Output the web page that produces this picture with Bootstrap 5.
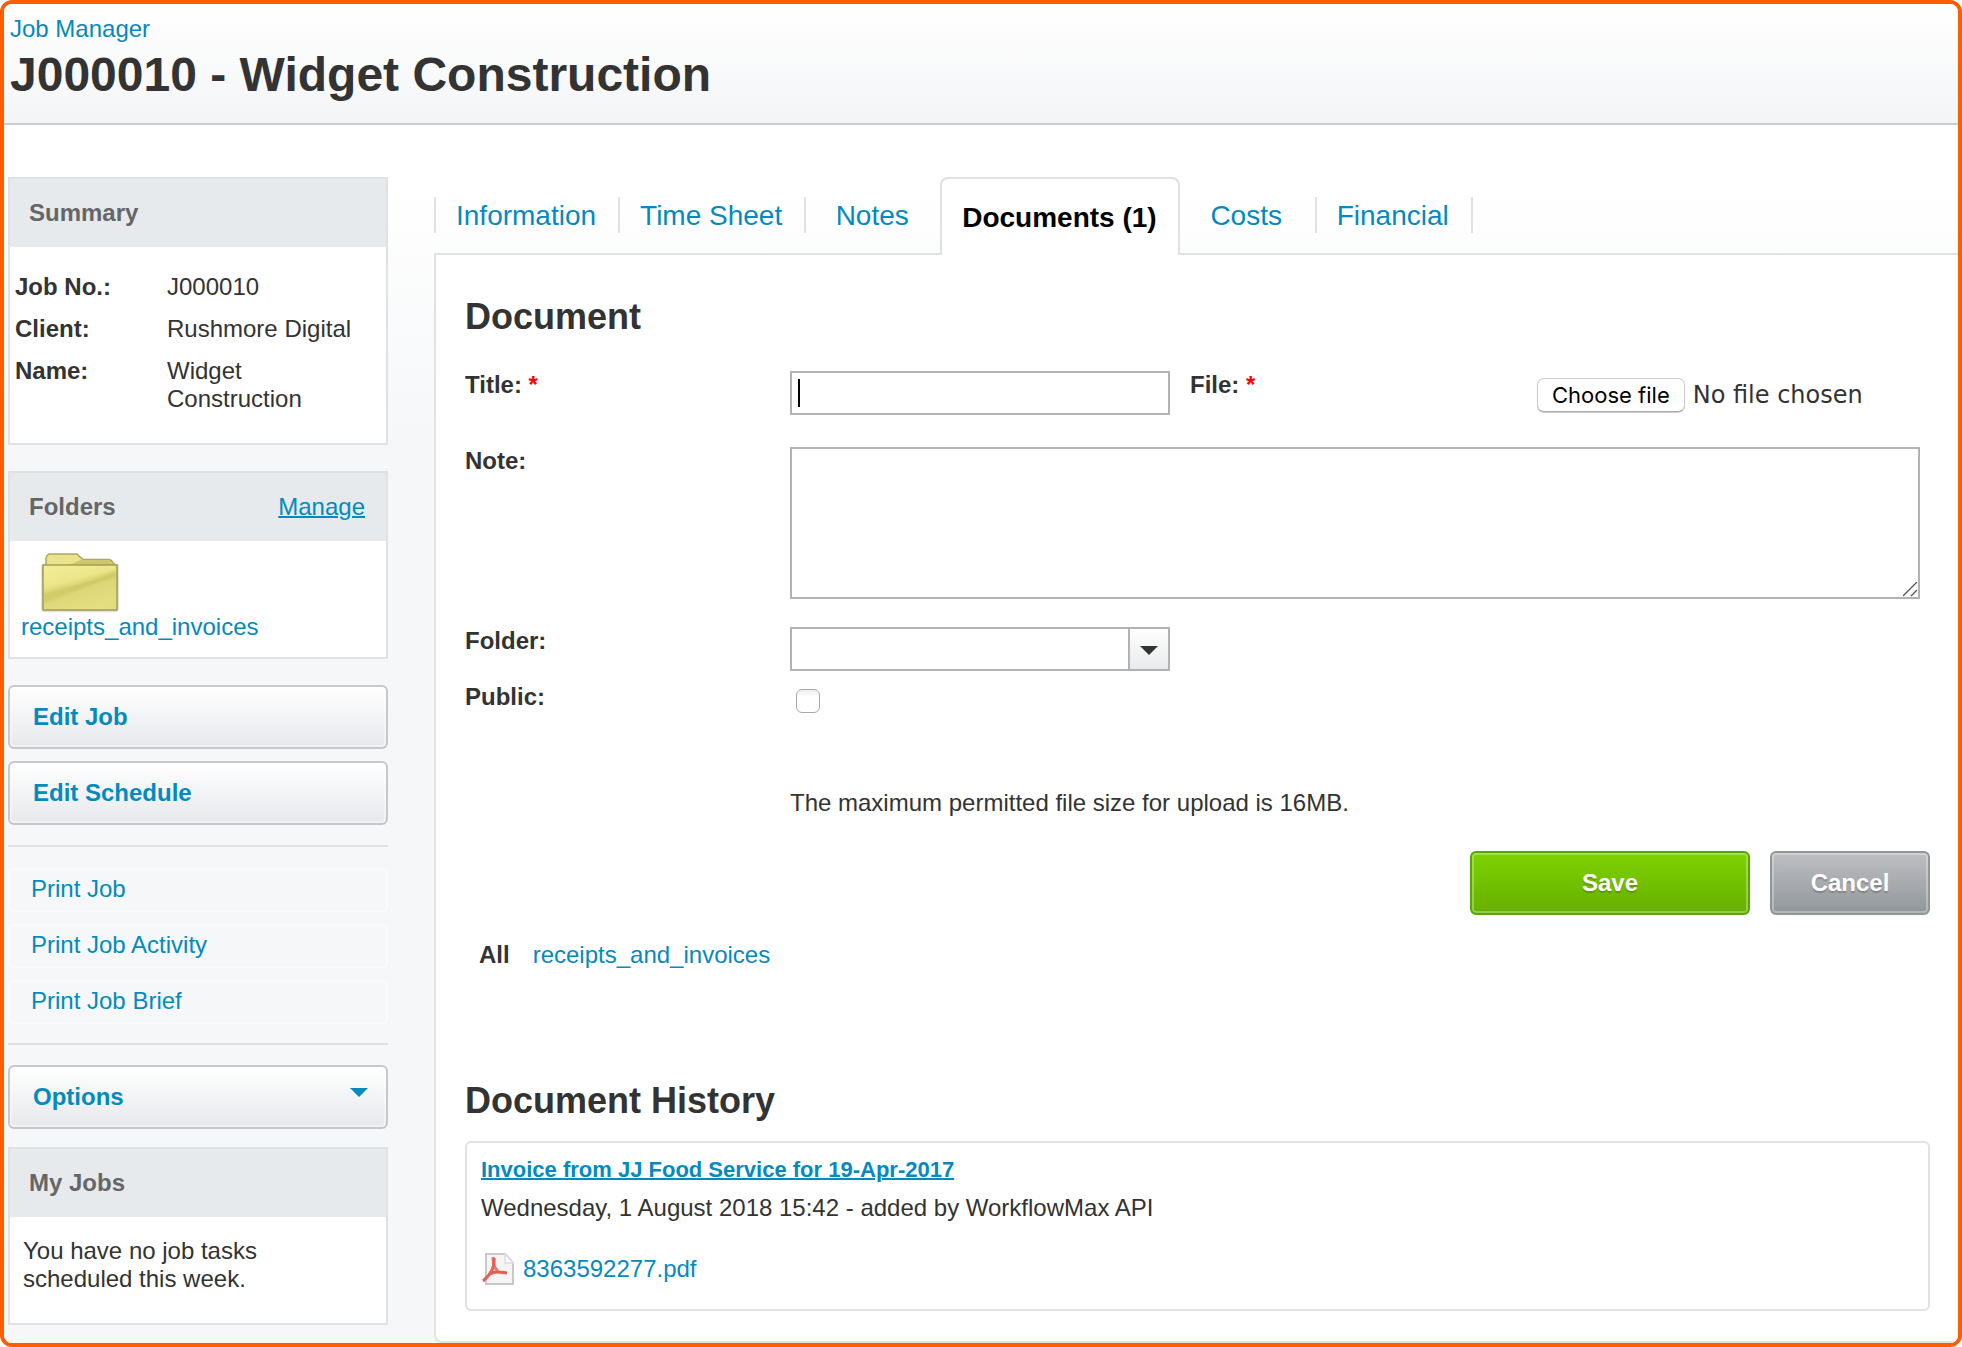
<!DOCTYPE html>
<html lang="en">
<head>
<meta charset="utf-8">
<meta name="viewport" content="width=device-width, initial-scale=1">
<title>J000010 - Widget Construction</title>
<link rel="stylesheet" href="https://cdn.jsdelivr.net/npm/bootstrap@5.3.0/dist/css/bootstrap.min.css">
<style>
  body { font: 24px/28px "Liberation Sans", Arial, sans-serif; color: #333; background: #fff; }
  a { color: #048abf; text-decoration: none; }
  a:hover { color: #036a93; text-decoration: underline; }
  .app-frame { border: 4px solid #ff5d00; border-radius: 12px; overflow: hidden; }

  .page-top { padding: 11px 6px 20px; border-bottom: 2px solid #ccc; background: linear-gradient(#fff, #f4f5f7); }
  .page-top h1 { font-size: 48px; line-height: 56px; font-weight: 700; margin: 4px 0 0; }
  .page-main { padding: 52px 0 0 4px; gap: 46px; background: linear-gradient(#fff 60px, #f6f7f9 310px); }

  /* Sidebar */
  .side { width: 380px; flex: none; padding-bottom: 18px; }
  .panel { border: 2px solid #e0e1e2; background: #fff; margin-bottom: 26px; }
  .panel-head { background: #e6eaed; padding: 20px 21px 20px 19px; }
  .panel-head h2 { font-size: 24px; line-height: 28px; font-weight: 700; color: #666; margin: 0; }
  .facts { padding: 26px 20px 16px 5px; margin: 0; }
  .facts div { display: flex; margin-bottom: 14px; }
  .facts dt { width: 152px; flex: none; }
  .facts dd { margin: 0; }
  .folder-body { padding: 12px 11px 16px; }
  .folder-body svg { display: block; margin-left: 20px; }
  .side-actions { gap: 12px; }
  .side-btn { height: 64px; border: 2px solid #c6c8ca; border-radius: 6px; padding: 16px 23px; font-size: 24px; line-height: 28px; font-weight: 700; color: #048abf; text-align: left; background: linear-gradient(#fff, #e6e8eb); box-shadow: inset 0 0 0 2px rgba(255,255,255,.4); }
  .side-options { margin: 20px 0 18px; padding-right: 18px; }
  .options-arrow { margin-top: 5px; }
  .side-rule { height: 2px; margin: 0; border: 0; background: #e0e1e2; opacity: 1; }
  .side-actions + .side-rule { margin-top: 20px; }
  .print-links { margin: 21px 0 19px; gap: 12px; }
  .print-links a { border: 2px solid #f9fafb; border-radius: 6px; padding: 5px 21px 7px; }
  .jobs-text { padding: 20px 90px 30px 13px; }

  /* Tabs */
  .tab-bar { height: 76px; margin: 0; padding: 0; list-style: none; }
  .tab-bar li { height: 36px; min-width: 137px; margin-top: 20px; padding: 0 22px 0 20px; font-size: 28px; line-height: 38px; text-align: center; border-right: 2px solid #e0e1e2; }
  .tab-bar li:first-child { border-left: 2px solid #e0e1e2; }
  .tab-bar li.before-current { border-right: 0; min-width: 134px; }
  .tab-bar li.current { position: relative; height: 78px; margin: 0; padding: 20px 21px 0 20px; border: 2px solid #e0e1e2; border-bottom: 0; border-radius: 8px 8px 0 0; background: #fff; font-weight: 700; }
  .tab-bar li.current a { color: #000; }
  .sheet { flex: 1; padding: 41px 28px 28px 29px; border: 2px solid #e0e1e2; border-right: 0; border-radius: 0 0 0 8px; background: #fff; }
  .sheet h2 { font-size: 36px; line-height: 42px; font-weight: 700; margin: 0; }

  /* Form */
  .doc-form { display: grid; grid-template-columns: 325fr 400fr 347fr 383fr; padding: 33px 10px 0 0; }
  .doc-form .cap { font-weight: 700; align-self: start; }
  .doc-form .req { color: #f00; }
  .wide { grid-column: 2 / -1; }
  .half { grid-column: 2; margin-right: 20px; }
  .box { display: block; border: 2px solid #b0b2b3; border-radius: 0; background-color: #fff; color: #333; padding: 6px; min-width: 0; outline: 0; }
  .box-line { height: 44px; }
  .box-text { background: linear-gradient(#000, #000) 6px 6px / 2px 28px no-repeat #fff; }
  .box-note { height: 152px; width: 100%; resize: both; margin-top: 32px; }
  .box-note::-webkit-resizer { background: url("data:image/svg+xml,%3Csvg xmlns='http://www.w3.org/2000/svg' width='15' height='15'%3E%3Cpath d='M0 14L14 0M8 14L14 8' stroke='%23555' stroke-width='1.3'/%3E%3C/svg%3E") no-repeat; }
  .note-cap { margin-top: 32px; }
  .gap-folder { margin-top: 28px; }
  .gap-public { margin-top: 12px; }
  .doc-form .public-cap { grid-column: 1; }
  .box-pick { appearance: none; background:
      url("data:image/svg+xml,%3Csvg xmlns='http://www.w3.org/2000/svg' width='18' height='9'%3E%3Cpath d='M0 0H18L9 9Z' fill='%23333'/%3E%3C/svg%3E") right 10px top 17px no-repeat,
      linear-gradient(#b0b2b3, #b0b2b3) right 38px top 0 / 2px 100% no-repeat,
      linear-gradient(#fff, #e9eaec) right top / 38px 100% no-repeat, #fff; }
  .tick { appearance: none; width: 24px; height: 24px; margin: 6px 0 0 6px; border: 1px solid #a9a9a9; border-radius: 6px; background: linear-gradient(#eee, #fff 7px); }
  .tick:checked { background: #048abf; }
  .limit { margin: 76px 0 34px; }
  .pick-btn { height: 34px; border: 1px solid #ccc; border-bottom-color: #aaa; border-radius: 7px; padding: 2px 14px; font: 22px/28px Inter, sans-serif; color: #000; background: #fff; box-shadow: 0 1px 1px rgba(0,0,0,.2); white-space: nowrap; cursor: pointer; }
  .pick-name { font: 24px/28px "DejaVu Sans", sans-serif; white-space: nowrap; }
  .form-actions { gap: 20px; }
  .act { height: 64px; border-radius: 6px; border: 2px solid; font-size: 24px; line-height: 28px; font-weight: 700; color: #fff; padding: 0; box-shadow: inset 0 0 0 2px rgba(255,255,255,.3); text-shadow: 0 2px 1px rgba(0,0,0,.2); }
  .act-save { width: 280px; border-color: #58a800; background: linear-gradient(#7dd200, #68af00); }
  .act-cancel { width: 160px; border-color: #919699; background: linear-gradient(#bdbec2, #92979a); }

  /* History */
  .folder-filter { gap: 23px; margin: 26px 0 111px; padding-left: 14px; }
  .history { margin-top: 19px; padding: 13px 13px 24px 14px; border: 2px solid #e0e1e2; border-radius: 6px; }
  .history-title { font-size: 22px; font-weight: 700; }
  .history-title, .underlined { text-decoration: underline; text-decoration-thickness: 2px; }
  .history-when { margin: 10px 0 31px; }
</style>
<script src="https://cdn.jsdelivr.net/npm/bootstrap@5.3.0/dist/js/bootstrap.bundle.min.js"></script>
</head>
<body>
<div class="app-frame min-vh-100 d-flex flex-column">
  <header class="page-top">
    <a class="d-block" href="#">Job Manager</a>
    <h1>J000010 - Widget Construction</h1>
  </header>

  <div class="page-main d-flex flex-grow-1">
    <aside class="side">
      <section class="panel">
        <div class="panel-head"><h2>Summary</h2></div>
        <dl class="facts">
          <div><dt>Job No.:</dt><dd>J000010</dd></div>
          <div><dt>Client:</dt><dd>Rushmore Digital</dd></div>
          <div><dt>Name:</dt><dd>Widget Construction</dd></div>
        </dl>
      </section>

      <section class="panel">
        <div class="panel-head d-flex justify-content-between"><h2>Folders</h2><a class="underlined" href="#">Manage</a></div>
        <div class="folder-body">
          <svg width="78" height="60" viewBox="0 0 78 60" aria-hidden="true">
            <defs>
              <linearGradient id="fg" x1="0" y1="0" x2=".45" y2="1">
                <stop offset="0" stop-color="#f3ef96"/><stop offset=".42" stop-color="#ece68a"/>
                <stop offset=".56" stop-color="#d6cf70"/><stop offset=".62" stop-color="#dcd677"/><stop offset="1" stop-color="#e3dd80"/>
              </linearGradient>
              <filter id="fs" x="-10%" y="-10%" width="120%" height="125%"><feGaussianBlur stdDeviation="1"/></filter>
            </defs>
            <path d="M1 12H77V58H1Z" fill="#8b886a" opacity=".7" filter="url(#fs)"/>
            <path d="M5 12V5Q6 1 9 1H35Q37 1 38 3L42 6.500H68Q71 7 72 10L75 12V20H5Z" fill="#e9e489" stroke="#aaa668" stroke-width="1.500"/>
            <path d="M28 12L40 7H68L73 12Z" fill="#cdc76c"/>
            <path d="M2 12H76V56Q76 57 75 57H3Q2 57 2 56Z" fill="url(#fg)" stroke="#a39f58" stroke-width="1.500"/>
            <path d="M3 42Q40 33 75 18V23Q40 36 3 50Z" fill="#c9c25d" opacity=".5" filter="url(#fs)"/>
          </svg>
          <a class="d-block" href="#">receipts_and_invoices</a>
        </div>
      </section>

      <div class="side-actions d-grid">
        <button class="side-btn" type="button">Edit Job</button>
        <button class="side-btn" type="button">Edit Schedule</button>
      </div>
      <hr class="side-rule">
      <nav class="print-links d-flex flex-column" aria-label="Print">
        <a href="#">Print Job</a>
        <a href="#">Print Job Activity</a>
        <a href="#">Print Job Brief</a>
      </nav>
      <hr class="side-rule">
      <button class="side-btn side-options d-flex justify-content-between w-100" type="button">Options
        <svg class="options-arrow" width="18" height="9" viewBox="0 0 18 9" aria-hidden="true"><path d="M0 0H18L9 9Z" fill="#048abf"/></svg>
      </button>
      <section class="panel mb-0">
        <div class="panel-head"><h2>My Jobs</h2></div>
        <p class="jobs-text mb-0">You have no job tasks scheduled this week.</p>
      </section>
    </aside>

    <main class="flex-grow-1 d-flex flex-column">
      <ul class="tab-bar d-flex">
        <li><a href="#">Information</a></li>
        <li><a href="#">Time Sheet</a></li>
        <li class="before-current"><a href="#">Notes</a></li>
        <li class="current"><a href="#" aria-current="page">Documents (1)</a></li>
        <li><a href="#">Costs</a></li>
        <li><a href="#">Financial</a></li>
      </ul>
      <div class="sheet">
        <h2>Document</h2>
        <form>
          <div class="doc-form">
            <label class="cap" for="title">Title: <span class="req">*</span></label>
            <input class="box box-line box-text half" id="title" type="text">
            <label class="cap" for="file">File: <span class="req">*</span></label>
            <div class="d-flex align-items-center pt-1">
              <input class="visually-hidden" id="file" type="file">
              <label class="pick-btn me-2" for="file">Choose file</label>
              <span class="pick-name">No file chosen</span>
            </div>

            <label class="cap note-cap" for="note">Note:</label>
            <textarea class="box box-note wide" id="note"></textarea>

            <label class="cap gap-folder" for="folder">Folder:</label>
            <select class="box box-line box-pick half gap-folder" id="folder"><option></option><option>receipts_and_invoices</option></select>

            <label class="cap gap-public public-cap" for="public">Public:</label>
            <div class="wide gap-public d-flex"><input class="tick" id="public" type="checkbox"></div>

            <p class="wide limit">The maximum permitted file size for upload is 16MB.</p>
          </div>
          <div class="form-actions d-flex justify-content-end">
            <button class="act act-save" type="submit">Save</button>
            <button class="act act-cancel" type="button">Cancel</button>
          </div>
        </form>

        <div class="folder-filter d-flex"><strong>All</strong><a href="#">receipts_and_invoices</a></div>

        <h2>Document History</h2>
        <article class="history">
          <a class="history-title d-block" href="#">Invoice from JJ Food Service for 19-Apr-2017</a>
          <p class="history-when">Wednesday, 1 August 2018 15:42 - added by WorkflowMax API</p>
          <div class="d-flex align-items-center gap-2">
            <svg width="34" height="32" viewBox="0 0 34 32" aria-hidden="true">
              <path d="M5 1H24L32 10V31H5Z" fill="#f5f5f5" stroke="#c8c8c8" stroke-width="2"/>
              <path d="M24 1V10H32Z" fill="#fff" stroke="#dcdcdc" stroke-width="1.500"/>
              <path d="M12 4C12 11 14 16 17 18" fill="none" stroke="#e8796e" stroke-width="3"/>
              <path d="M13 5C14 12 11 21 2 28" fill="none" stroke="#e25f52" stroke-width="3"/>
              <path d="M9 21C14 18 19 19 26 20" fill="none" stroke="#e25f52" stroke-width="3"/>
            </svg>
            <a href="#">8363592277.pdf</a>
          </div>
        </article>
      </div>
    </main>
  </div>
</div>
</body>
</html>
